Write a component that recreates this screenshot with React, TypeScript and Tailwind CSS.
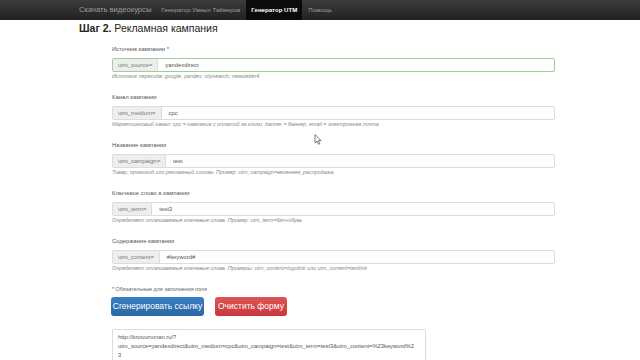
import React from "react";

const fields = [
  {
    label: "Источник кампании *",
    addon: "utm_source=",
    value: "yandexdirect",
    help: "Источник перехода: google, yandex, citysearch, newsletter4",
    ok: true,
  },
  {
    label: "Канал кампании",
    addon: "utm_medium=",
    value: "cpc",
    help: "Маркетинговый канал: cpc = кампания с оплатой за клики, banner = баннер, email = электронная почта",
  },
  {
    label: "Название кампании",
    addon: "utm_campaign=",
    value: "test",
    help: "Товар, промокод или рекламный слоган. Пример: utm_campaign=весенняя_распродажа",
  },
  {
    label: "Ключевое слово в кампании",
    addon: "utm_term=",
    value: "test3",
    help: "Определяет оплачиваемые ключевые слова. Пример: utm_term=бег+обувь",
  },
  {
    label: "Содержание кампании",
    addon: "utm_content=",
    value: "#keyword#",
    help: "Определяет оплачиваемые ключевые слова. Примеры: utm_content=logolink или utm_content=textlink",
  },
];

export default function App() {
  return (
    <div
      className="relative w-[640px] h-[360px] overflow-hidden bg-white text-[#333]"
      style={{ fontFamily: '"Liberation Sans", Arial, sans-serif' }}
    >
      <nav className="h-[20px] bg-gradient-to-b from-[#3c3c3c] to-[#222] flex items-stretch pl-[79px] whitespace-nowrap">
        <span className="flex items-center text-[7.6px] text-[#9d9d9d] pr-[4px]">Скачать видеокурсы</span>
        <span className="flex items-center text-[6.1px] text-[#9d9d9d] px-[6px]">Генератор Умных Таймеров</span>
        <span className="flex items-center justify-center text-[6.1px] text-white font-bold bg-[#0b0b0b] w-[56px]">
          Генератор UTM
        </span>
        <span className="flex items-center text-[6.1px] text-[#9d9d9d] px-[6px]">Помощь</span>
      </nav>

      <div className="ml-[79px]">
        <h3 className="mt-[1px] text-[10.5px] leading-[14px] text-[#222]">
          <b>Шаг 2.</b> Рекламная кампания
        </h3>

        <form className="ml-[33px] w-[443px] mt-[10px]">
          {fields.map((f) => (
            <div key={f.addon} className="mb-[13px]">
              <label className="block text-[5.9px] leading-[9px] text-[#555] mb-[4px]">{f.label}</label>
              <div
                className={`flex h-[14px] rounded-[2px] border ${
                  f.ok ? "border-[#9fcc98]" : "border-[#dcdcdc]"
                }`}
              >
                <span className="flex items-center px-[5px] bg-[#eee] border-r border-[#dcdcdc] text-[5.9px] text-[#777]">
                  {f.addon}
                </span>
                <span className="flex items-center px-[7px] text-[5.9px] text-[#555]">{f.value}</span>
              </div>
              <p className="text-[5.4px] leading-[8px] italic text-[#888] whitespace-nowrap">{f.help}</p>
            </div>
          ))}

          <p className="text-[5.4px] leading-[8px] text-[#666]">* Обязательные для заполнения поля</p>

          <div className="flex gap-[11px] mt-[4px] -ml-[1px]">
            <button
              type="button"
              className="h-[19px] w-[93px] rounded-[3px] bg-gradient-to-b from-[#3a80c2] to-[#2b67a4] text-white text-[8.5px]"
            >
              Сгенерировать ссылку
            </button>
            <button
              type="button"
              className="h-[19px] w-[72px] rounded-[3px] bg-gradient-to-b from-[#dc5656] to-[#c8363c] text-white text-[8.5px]"
            >
              Очистить форму
            </button>
          </div>

          <div className="mt-[13px] w-[314px] h-[40px] border border-[#dcdcdc] rounded-[2px] px-[5px] pt-[3px] text-[5.8px] leading-[9px] text-[#555] break-all">
            http://krotovroman.ru/?
            <br />
            utm_source=yandexdirect&amp;utm_medium=cpc&amp;utm_campaign=test&amp;utm_term=test3&amp;utm_content=%23keyword%2
            <br />3
          </div>
        </form>
      </div>

      <svg className="absolute left-[314px] top-[134px]" width="8" height="11" viewBox="0 0 8 11">
        <path d="M1 0.5 L1 9 L3 7 L4.5 10.3 L5.8 9.7 L4.4 6.6 L7 6.6 Z" fill="#fff" stroke="#555" strokeWidth="0.8" />
      </svg>
    </div>
  );
}
